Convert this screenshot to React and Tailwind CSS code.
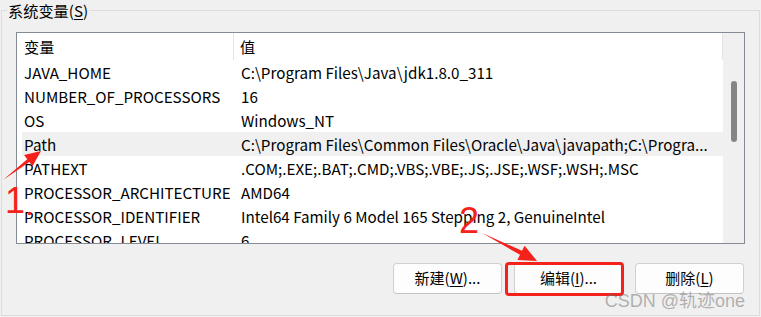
import React from 'react';

const rows = [
  ['JAVA_HOME', 'C:\\Program Files\\Java\\jdk1.8.0_311'],
  ['NUMBER_OF_PROCESSORS', '16'],
  ['OS', 'Windows_NT'],
  ['Path', 'C:\\Program Files\\Common Files\\Oracle\\Java\\javapath;C:\\Progra...'],
  ['PATHEXT', '.COM;.EXE;.BAT;.CMD;.VBS;.VBE;.JS;.JSE;.WSF;.WSH;.MSC'],
  ['PROCESSOR_ARCHITECTURE', 'AMD64'],
  ['PROCESSOR_IDENTIFIER', 'Intel64 Family 6 Model 165 Stepping 2, GenuineIntel'],
  ['PROCESSOR_LEVEL', '6'],
];

function Button({ label, hotkey, dots }) {
  return (
    <button className="w-[109px] h-[31px] bg-[#fdfdfd] border border-[#d0d0d0] border-b-[#c4c4c4] rounded-[4px] text-[15px] text-black flex items-center justify-center">
      {label}(<span className="underline underline-offset-2">{hotkey}</span>){dots && '...'}
    </button>
  );
}

export default function App() {
  return (
    <div className="relative w-[761px] h-[317px] overflow-hidden bg-[#f0f0f0] pt-[10px] px-[1px] font-['Noto_Sans_CJK_SC','Noto_Sans',sans-serif] text-[15.2px] text-black">
      <div className="h-[306px] border border-[#dcdcdc]">
        <div className="-mt-[11px] ml-[5px] px-[1px] w-fit bg-[#f0f0f0] leading-[20px]">
          系统变量(<span className="underline underline-offset-2">S</span>)
        </div>

        <div className="ml-[14px] mt-[12px] w-[729px] h-[212px] border border-[#858b93] bg-white flex">
          <div className="flex-1 overflow-hidden pl-[5px]">
            <div className="h-[27px] flex items-center">
              <div className="w-[212px] h-full flex items-center pl-[2px] border-r border-[#e5e5e5]">变量</div>
              <div className="flex-1 h-full flex items-center pl-[6px] border-r border-[#e5e5e5]">值</div>
            </div>
            {rows.map(([name, value]) => (
              <div
                key={name}
                className={`h-[24px] flex items-center whitespace-nowrap ${name === 'Path' ? 'bg-[#f0f0f0]' : ''}`}
              >
                <div className="w-[213px] shrink-0 pl-[2px] overflow-hidden">{name}</div>
                <div className="flex-1 pl-[6px] overflow-hidden">{value}</div>
              </div>
            ))}
          </div>
          <div className="w-[21px] bg-[#f0f0f0] flex justify-center">
            <div className="mt-[48px] w-[6px] h-[61px] rounded-[3px] bg-[#858585]" />
          </div>
        </div>

        <div className="mt-[19px] mr-[15px] flex justify-end gap-[12px]">
          <Button label="新建" hotkey="W" dots />
          <Button label="编辑" hotkey="I" dots />
          <Button label="删除" hotkey="L" />
        </div>
      </div>

      {/* annotations */}
      <svg className="absolute left-0 top-0 pointer-events-none" width="761" height="317">
        <polygon points="3,180 27.2,159.3 24.1,155.1 41,151 32.5,166.3 29.4,162.1" fill="#f5221b" />
        <polygon points="482,233 522,250.8 524.6,245.7 537,261 517.4,259.9 520,254.8" fill="#f5221b" />
        <circle cx="29.5" cy="213.5" r="1.8" fill="#f5221b" />
      </svg>
      <span className="absolute left-[5px] top-[183px] text-[36px] leading-none text-[#f5221b] font-['Liberation_Sans',sans-serif]">1</span>
      <span className="absolute left-[459px] top-[203px] text-[36px] leading-none text-[#f5221b] font-['Liberation_Sans',sans-serif]">2</span>
      <div className="absolute left-[505px] top-[262px] w-[119px] h-[34px] border-[3px] border-[#f5221b] rounded-[4px]" />
      <span className="absolute right-[16px] bottom-[7px] text-[18px] leading-none text-[rgba(110,110,110,0.5)] font-['Liberation_Sans','Noto_Sans_CJK_SC',sans-serif]">
        CSDN @轨迹one
      </span>
    </div>
  );
}
